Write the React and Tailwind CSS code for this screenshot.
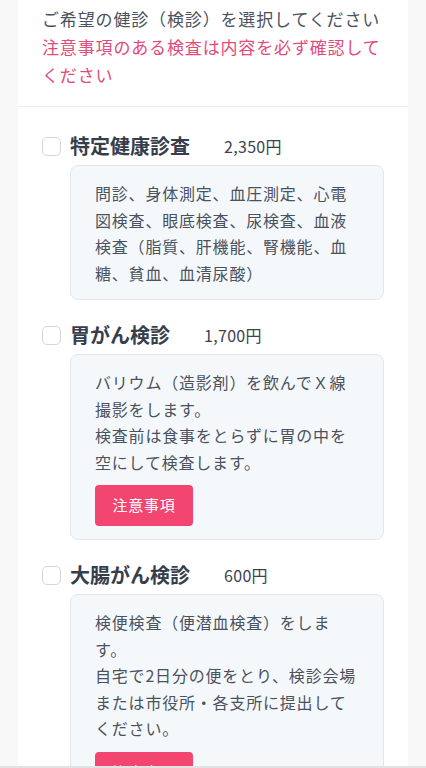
const items = [
  {
    title: "特定健康診査",
    price: "2,350円",
    lines: ["問診、身体測定、血圧測定、心電図検査、眼底検査、尿検査、血液検査（脂質、肝機能、腎機能、血糖、貧血、血清尿酸）"],
    notice: false,
  },
  {
    title: "胃がん検診",
    price: "1,700円",
    lines: ["バリウム（造影剤）を飲んでＸ線撮影をします。", "検査前は食事をとらずに胃の中を空にして検査します。"],
    notice: true,
  },
  {
    title: "大腸がん検診",
    price: "600円",
    lines: ["検便検査（便潜血検査）をします。", "自宅で2日分の便をとり、検診会場または市役所・各支所に提出してください。"],
    notice: true,
  },
];

function ExamItem({ item }) {
  return (
    <div>
      <label className="flex items-center h-[28px]">
        <span className="w-[19px] h-[19px] rounded-[5px] border-[1.5px] border-[#d4d6da] bg-white shrink-0" />
        <span className="ml-[9px] text-[20px] font-bold text-[#363e4c] leading-[28px]">{item.title}</span>
        <span className="ml-[34px] text-[16px] text-[#3b4351] leading-[28px] tracking-[0.02em]">{item.price}</span>
      </label>
      <div className="ml-[28px] mt-[5px] rounded-[8px] border border-[#e3e7ec] bg-[#f5f8fb] pl-[24px] pr-[24px] pt-[14px] pb-[13px]">
        {item.lines.map((l, i) => (
          <p key={i} className="text-[16px] leading-[26.5px] tracking-[0.05em] text-[#4a5260]">
            {l}
          </p>
        ))}
        {item.notice && (
          <button className="mt-[10px] w-[98px] h-[41px] rounded-[4px] bg-[#f2456f] text-white text-[15px] tracking-[0.05em]">
            注意事項
          </button>
        )}
      </div>
    </div>
  );
}

export default function App() {
  return (
    <div
      className="min-h-screen bg-[#f8f8f8]"
      style={{ fontFamily: '"Noto Sans CJK JP", "Noto Sans", sans-serif' }}
    >
      <div className="mx-[18px] bg-white min-h-screen">
        <div className="px-6 pt-[5px] pb-[17px] border-b border-[#ececec]">
          <p className="text-[17px] leading-[28px] tracking-[0.05em] text-[#4a5260]">
            ご希望の健診（検診）を選択してください
          </p>
          <p className="text-[17px] leading-[28px] tracking-[0.05em] text-[#e24a7b]">
            注意事項のある検査は内容を必ず確認してください
          </p>
        </div>
        <div className="px-6 pt-[25px] pb-8 flex flex-col gap-[21px]">
          {items.map((item) => (
            <ExamItem key={item.title} item={item} />
          ))}
        </div>
      </div>
      <div className="fixed bottom-0 left-0 right-0 h-[2px] bg-[#e2e2e2]" />
    </div>
  );
}
